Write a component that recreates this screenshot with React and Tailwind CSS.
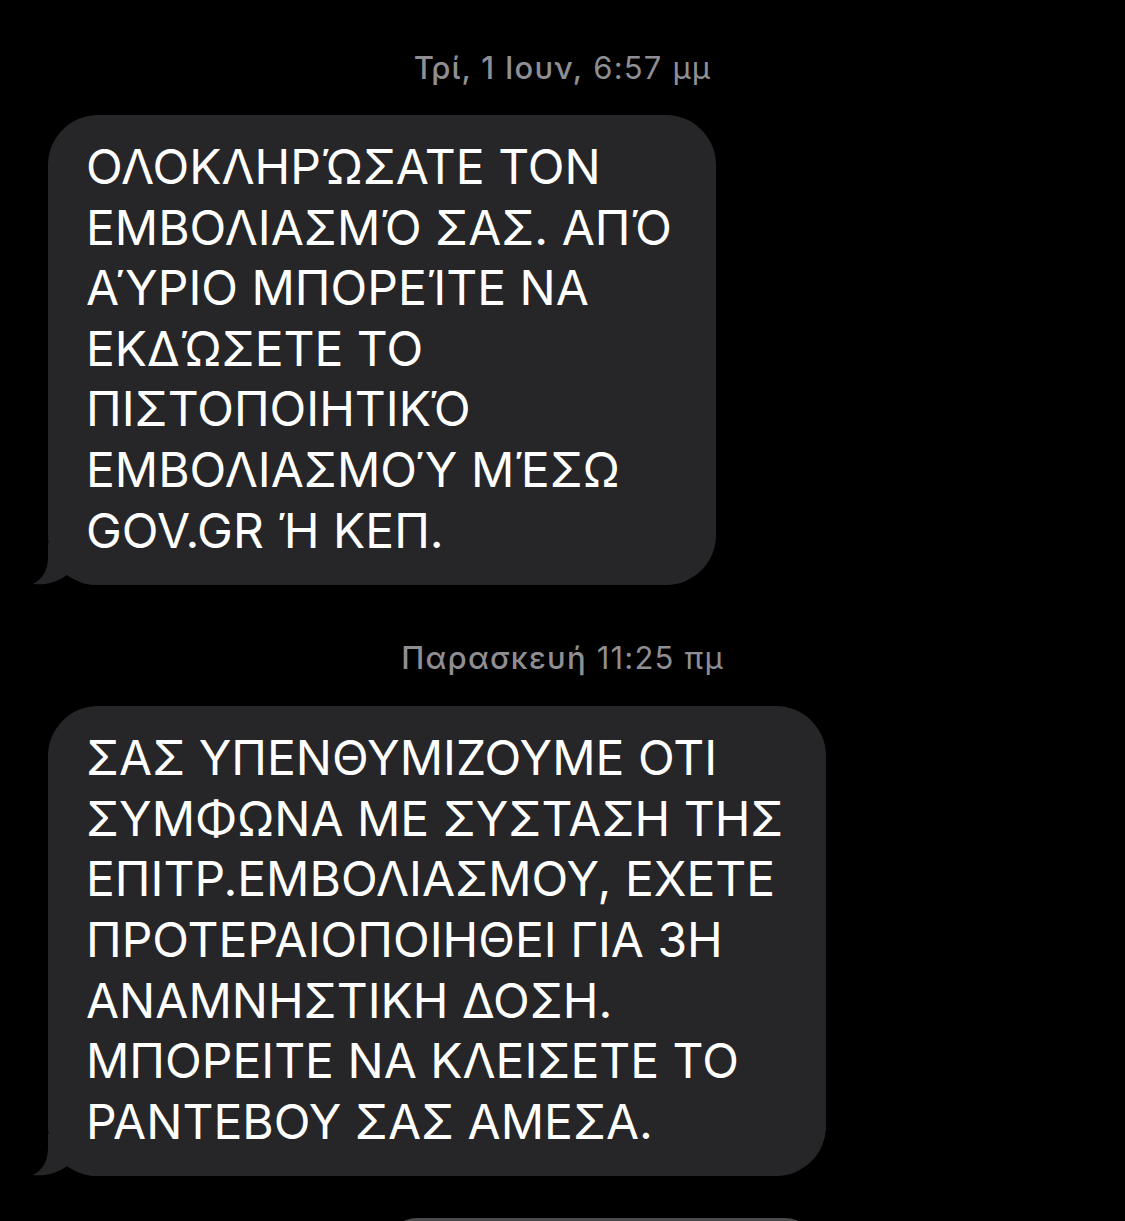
import React from "react";

function Tail() {
  return (
    <svg
      className="absolute left-[-15px] bottom-0"
      width="64"
      height="42"
      viewBox="0 0 64 42"
    >
      <path
        d="M15 0 L15 14 C15 28 9 36 0 41 C12 42.5 25 39 34 32 C42 38 52 42 64 42 L64 0 Z"
        fill="#262628"
      />
    </svg>
  );
}

function Bubble({ lines, width }) {
  return (
    <div
      className={`relative ml-[48px] rounded-[50px] bg-[#262628] pl-[38px] pr-[20px] pt-[22px] pb-[24px] text-[48px] leading-[60.6px] text-white ${width}`}
    >
      <Tail />
      <div className="relative">
        {lines.map((l, i) => (
          <div key={i} className="whitespace-nowrap">
            {l}
          </div>
        ))}
      </div>
    </div>
  );
}

export default function App() {
  return (
    <div className="h-[1221px] w-[1125px] overflow-hidden bg-black font-['Inter','Noto_Sans',sans-serif]">
      <div className="pt-[50px] text-center text-[31px] leading-[36px] tracking-[1.2px] text-[#8e8e93]">
        <span className="font-medium">Τρί, 1 Ιουν,</span> 6:57 μμ
      </div>
      <div className="mt-[29px]">
        <Bubble
          width="w-[668px]"
          lines={[
            "ΟΛΟΚΛΗΡΏΣΑΤΕ ΤΟΝ",
            "ΕΜΒΟΛΙΑΣΜΌ ΣΑΣ. ΑΠΌ",
            "ΑΎΡΙΟ ΜΠΟΡΕΊΤΕ ΝΑ",
            "ΕΚΔΏΣΕΤΕ ΤΟ",
            "ΠΙΣΤΟΠΟΙΗΤΙΚΌ",
            "ΕΜΒΟΛΙΑΣΜΟΎ ΜΈΣΩ",
            "GOV.GR Ή ΚΕΠ.",
          ]}
        />
      </div>
      <div className="mt-[55px] text-center text-[31px] leading-[36px] tracking-[1.2px] text-[#8e8e93]">
        <span className="font-medium">Παρασκευή</span> 11:25 πμ
      </div>
      <div className="mt-[30px]">
        <Bubble
          width="w-[778px]"
          lines={[
            "ΣΑΣ ΥΠΕΝΘΥΜΙΖΟΥΜΕ ΟΤΙ",
            "ΣΥΜΦΩΝΑ ΜΕ ΣΥΣΤΑΣΗ ΤΗΣ",
            "ΕΠΙΤΡ.ΕΜΒΟΛΙΑΣΜΟΥ, ΕΧΕΤΕ",
            "ΠΡΟΤΕΡΑΙΟΠΟΙΗΘΕΙ ΓΙΑ 3Η",
            "ΑΝΑΜΝΗΣΤΙΚΗ ΔΟΣΗ.",
            "ΜΠΟΡΕΙΤΕ ΝΑ ΚΛΕΙΣΕΤΕ ΤΟ",
            "ΡΑΝΤΕΒΟΥ ΣΑΣ ΑΜΕΣΑ.",
          ]}
        />
      </div>
      <div className="mt-[42px] ml-[387px] h-[60px] w-[428px] rounded-[40px] bg-[#4a4a4c]" />
    </div>
  );
}
